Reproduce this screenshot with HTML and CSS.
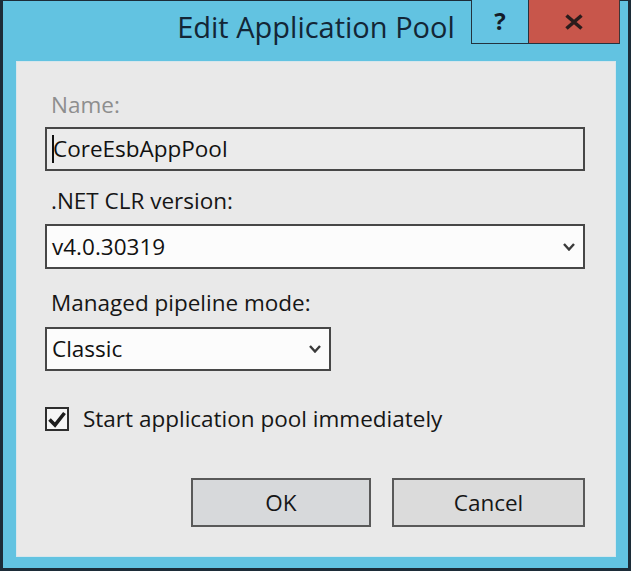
FILE: index.html
```html
<!DOCTYPE html>
<html>
<head>
<meta charset="utf-8">
<link rel="stylesheet" href="styles.css">
</head>
<body>
<div class="window">
  <div class="titlebar">
    <div class="title">Edit Application Pool</div>
  </div>
  <div class="caption-buttons">
    <div class="cap help">?</div>
    <div class="cap close">
      <svg width="20" height="16" viewBox="0 0 20 16"><path d="M2.5 1.5 L17.5 14.5 M17.5 1.5 L2.5 14.5" fill="none" stroke="#2a1c1c" stroke-width="3.6"/></svg>
    </div>
  </div>
  <div class="client">
    <div class="label disabled">Name:</div>
    <div class="textbox"><span class="caret"></span>CoreEsbAppPool</div>

    <div class="label gap1">.NET CLR version:</div>
    <div class="select wide">
      <span>v4.0.30319</span>
      <svg class="chev" width="12" height="8" viewBox="0 0 12 8"><polyline points="1,1 6,6.5 11,1" fill="none" stroke="#3a3a3a" stroke-width="2.4"/></svg>
    </div>

    <div class="label gap2">Managed pipeline mode:</div>
    <div class="select narrow">
      <span>Classic</span>
      <svg class="chev" width="12" height="8" viewBox="0 0 12 8"><polyline points="1,1 6,6.5 11,1" fill="none" stroke="#3a3a3a" stroke-width="2.4"/></svg>
    </div>

    <div class="check-row">
      <div class="checkbox">
        <svg width="20" height="20" viewBox="0 0 20 20"><polyline points="2.5,10.5 8,16 17.5,4" fill="none" stroke="#1e1e1e" stroke-width="3.6"/></svg>
      </div>
      <div class="check-label">Start application pool immediately</div>
    </div>

    <div class="button-row">
      <div class="btn ok">OK</div>
      <div class="btn cancel">Cancel</div>
    </div>
  </div>
</div>
</body>
</html>
```

FILE: styles.css
```css
html, body {
  margin: 0;
  padding: 0;
  background: #ffffff;
}

body {
  font-family: "Open Sans", "Noto Sans", sans-serif;
  color: #161616;
}

.window {
  position: relative;
  width: 600px;
  border-style: solid;
  border-color: #1c2c38;
  border-width: 1px 3px 3px 3px;
  background: #62c3e1;
  padding: 0 12px 11px 13px;
}

.titlebar {
  height: 60px;
  display: flex;
  justify-content: center;
}

.title {
  margin-top: 6px;
  font-size: 29px;
  line-height: 40px;
  color: #132636;
}

.caption-buttons {
  position: absolute;
  top: -1px;
  left: 468px;
  display: flex;
}

.cap {
  height: 43px;
  border-bottom: 1px solid #23323e;
  display: flex;
  justify-content: center;
  align-items: center;
  box-sizing: border-box;
}

.help {
  width: 58px;
  border-left: 1px solid #23323e;
  border-right: 1px solid #23323e;
  background: #65c4e3;
  font-size: 24px;
  font-weight: 700;
  color: #141c28;
  height: 44px;
  padding-bottom: 2px;
}

.close {
  width: 91px;
  border-right: 1px solid #3e3536;
  background: #c8564b;
  height: 44px;
  padding-top: 1px;
}

.close svg {
  display: block;
}

.client {
  background: #e9e9e9;
  border: 1px solid #d6e6ec;
  padding: 28px 30px 29px 28px;
}

.label {
  font-size: 22.5px;
  line-height: 30px;
  padding-left: 6px;
  color: #161616;
}

.label.disabled {
  color: #8e8e8e;
}

.gap1 {
  margin-top: 15px;
}

.gap2 {
  margin-top: 19px;
}

.textbox {
  margin-top: 7px;
  height: 40px;
  border: 2px solid #474747;
  background: #ebebeb;
  padding-left: 5px;
  font-size: 22.5px;
  line-height: 40px;
  color: #111;
  display: flex;
  align-items: center;
}

.caret {
  display: inline-block;
  width: 0;
  height: 28px;
  border-left: 2px solid #111;
  margin-right: -1px;
}

.select {
  margin-top: 8px;
  border: 2px solid #474747;
  background: #fcfcfc;
  padding: 0 8px 0 5px;
  font-size: 22.5px;
  line-height: 41px;
  color: #111;
  display: flex;
  justify-content: space-between;
  align-items: center;
}

.select.narrow {
  margin-top: 9px;
  width: 269px;
  line-height: 40px;
}

.chev {
  display: block;
}

.check-row {
  margin-top: 33px;
  display: flex;
  align-items: center;
  gap: 14px;
  height: 30px;
}

.checkbox {
  width: 20px;
  height: 20px;
  border: 2px solid #2e2e2e;
  background: #f6f6f6;
}

.checkbox svg {
  display: block;
}

.check-label {
  font-size: 22.5px;
  line-height: 30px;
  color: #161616;
}

.button-row {
  margin-top: 44px;
  display: flex;
  justify-content: flex-end;
  gap: 21px;
}

.btn {
  height: 45px;
  border: 2px solid #595959;
  font-size: 22.5px;
  line-height: 45px;
  text-align: center;
  color: #161616;
}

.ok {
  width: 176px;
  background: #d7d9db;
}

.cancel {
  width: 189px;
  background: #dbdbdb;
}
```
